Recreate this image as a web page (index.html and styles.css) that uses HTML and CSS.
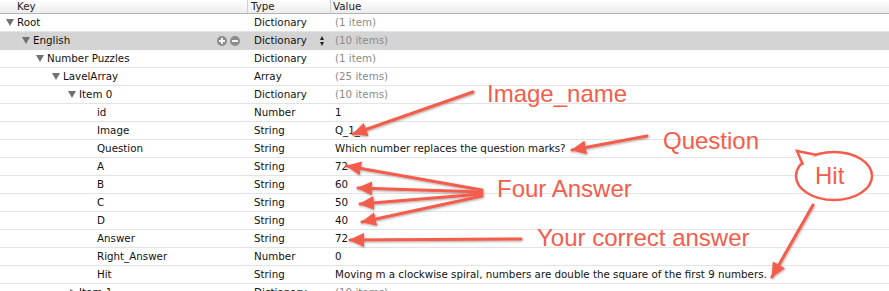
FILE: index.html
```html
<!DOCTYPE html>
<html lang="en">
<head>
  <meta charset="UTF-8">
  <title>Property List – Root</title>
  <link rel="stylesheet" href="styles.css">
</head>
<body>

  <div class="plist">
    <div class="head">
      <div class="h-key">Key</div>
      <div class="h-type">Type</div>
      <div class="h-value">Value</div>
    </div>

    <div class="row">
      <div class="key lvl0"><span class="twisty open"></span>Root</div>
      <div class="type">Dictionary</div>
      <div class="value muted">(1 item)</div>
    </div>
    <div class="row selected">
      <div class="key lvl1"><span class="twisty open"></span>English
        <span class="tools"><span class="btn plus"></span><span class="btn minus"></span></span>
      </div>
      <div class="type">Dictionary <span class="stepper"></span></div>
      <div class="value muted">(10 items)</div>
    </div>
    <div class="row">
      <div class="key lvl2"><span class="twisty open"></span>Number Puzzles</div>
      <div class="type">Dictionary</div>
      <div class="value muted">(1 item)</div>
    </div>
    <div class="row">
      <div class="key lvl3"><span class="twisty open"></span>LavelArray</div>
      <div class="type">Array</div>
      <div class="value muted">(25 items)</div>
    </div>
    <div class="row">
      <div class="key lvl4"><span class="twisty open"></span>Item 0</div>
      <div class="type">Dictionary</div>
      <div class="value muted">(10 items)</div>
    </div>
    <div class="row">
      <div class="key lvl5"><span class="twisty"></span>id</div>
      <div class="type">Number</div>
      <div class="value">1</div>
    </div>
    <div class="row">
      <div class="key lvl5"><span class="twisty"></span>Image</div>
      <div class="type">String</div>
      <div class="value">Q_1_rr</div>
    </div>
    <div class="row">
      <div class="key lvl5"><span class="twisty"></span>Question</div>
      <div class="type">String</div>
      <div class="value">Which number replaces the question marks?</div>
    </div>
    <div class="row">
      <div class="key lvl5"><span class="twisty"></span>A</div>
      <div class="type">String</div>
      <div class="value">72</div>
    </div>
    <div class="row">
      <div class="key lvl5"><span class="twisty"></span>B</div>
      <div class="type">String</div>
      <div class="value">60</div>
    </div>
    <div class="row">
      <div class="key lvl5"><span class="twisty"></span>C</div>
      <div class="type">String</div>
      <div class="value">50</div>
    </div>
    <div class="row">
      <div class="key lvl5"><span class="twisty"></span>D</div>
      <div class="type">String</div>
      <div class="value">40</div>
    </div>
    <div class="row">
      <div class="key lvl5"><span class="twisty"></span>Answer</div>
      <div class="type">String</div>
      <div class="value">72</div>
    </div>
    <div class="row">
      <div class="key lvl5"><span class="twisty"></span>Right_Answer</div>
      <div class="type">Number</div>
      <div class="value">0</div>
    </div>
    <div class="row">
      <div class="key lvl5"><span class="twisty"></span>Hit</div>
      <div class="type">String</div>
      <div class="value">Moving m a clockwise spiral, numbers are double the square of the first 9 numbers.</div>
    </div>
    <div class="row">
      <div class="key lvl4"><span class="twisty closed"></span>Item 1</div>
      <div class="type">Dictionary</div>
      <div class="value muted">(10 items)</div>
    </div>
  </div>

  <!-- hand-drawn notes on top of the list -->
  <svg class="notes" width="889" height="291" viewBox="0 0 889 291">
    <defs>
      <marker id="head" markerUnits="userSpaceOnUse" markerWidth="16" markerHeight="14" refX="14" refY="7" orient="auto">
        <path d="M0 0 L15 7 L0 14 Z" fill="#f45d4c"/>
      </marker>
      <filter id="shade" x="-10%" y="-10%" width="130%" height="130%">
        <feDropShadow dx="0.6" dy="1" stdDeviation="0.8" flood-color="#000" flood-opacity="0.35"/>
      </filter>
    </defs>

    <g class="arrows" filter="url(#shade)">
      <line x1="473" y1="92" x2="353" y2="134"/>
      <line x1="647" y1="136" x2="572" y2="150"/>
      <line x1="482" y1="190" x2="347" y2="166"/>
      <line x1="482" y1="192" x2="358" y2="188"/>
      <line x1="482" y1="194" x2="360" y2="204"/>
      <line x1="482" y1="196" x2="362" y2="222"/>
      <line x1="521" y1="239" x2="350" y2="240"/>
      <line x1="813" y1="205" x2="772" y2="277"/>
    </g>

    <g class="bubble">
      <ellipse cx="834" cy="176" rx="38" ry="24"/>
      <path class="tail-fill" d="M804 164 L797 151 L816 155 Z"/>
      <path class="tail" d="M803 165 L797 151 L817 155"/>
    </g>

    <g class="labels">
      <text x="487" y="102">Image_name</text>
      <text x="663" y="149">Question</text>
      <text x="497" y="197">Four Answer</text>
      <text x="537" y="246">Your correct answer</text>
      <text x="815" y="184">Hit</text>
    </g>
  </svg>

</body>
</html>
```

FILE: styles.css
```css
body {
  margin: 0;
  width: 889px;
  height: 291px;
  overflow: hidden;
  background: #fff;
  font-family: "DejaVu Sans", Verdana, sans-serif;
  font-size: 10.3px;
  color: #111;
  position: relative;
}
.plist {
  width: 889px;
}
.head {
  display: grid;
  grid-template-columns: 248px 83px 1fr;
  height: 13px;
  line-height: 13px;
  background: linear-gradient(#ffffff, #ececec);
  border-bottom: 1px solid #b4b4b4;
  color: #222;
}
.head > div {
  border-right: 1px solid #cfcfcf;
}
.h-key {
  padding-left: 17px;
}
.h-type {
  padding-left: 3px;
}
.h-value {
  padding-left: 2px;
  border-right: none !important;
}
.row {
  display: grid;
  grid-template-columns: 248px 83px 1fr;
  height: 17px;
  line-height: 17px;
  border-bottom: 1px solid #e3e3e3;
  white-space: nowrap;
}
.row.selected {
  background: #d4d4d4;
  border-bottom-color: #d4d4d4;
}
.key {
  display: flex;
  align-items: center;
}
.lvl0 { padding-left: 5px; }
.lvl1 { padding-left: 21px; }
.lvl2 { padding-left: 35px; }
.lvl3 { padding-left: 51px; }
.lvl4 { padding-left: 67px; }
.lvl5 { padding-left: 85px; }
.twisty {
  display: inline-block;
  width: 12px;
  height: 8px;
  flex: none;
}
.twisty.open::before {
  content: "";
  display: block;
  margin-left: 1px;
  width: 0;
  height: 0;
  border-left: 4.5px solid transparent;
  border-right: 4.5px solid transparent;
  border-top: 7px solid #717171;
}
.twisty.closed::before {
  content: "";
  display: block;
  margin-left: 3px;
  width: 0;
  height: 0;
  border-top: 4.5px solid transparent;
  border-bottom: 4.5px solid transparent;
  border-left: 7px solid #717171;
}
.tools {
  margin-left: auto;
  margin-right: 8px;
  display: flex;
  gap: 3px;
}
.btn {
  width: 10px;
  height: 10px;
  border-radius: 50%;
  background: #8b8b8b;
  position: relative;
}
.btn::before,
.plus::after {
  content: "";
  position: absolute;
  left: 2px;
  top: 4px;
  width: 6px;
  height: 2px;
  background: #f2f2f2;
}
.plus::after {
  left: 4px;
  top: 2px;
  width: 2px;
  height: 6px;
}
.type {
  padding-left: 6px;
  display: flex;
  align-items: center;
}
.stepper {
  margin-left: auto;
  margin-right: 6px;
  width: 5px;
  height: 10px;
  position: relative;
}
.stepper::before,
.stepper::after {
  content: "";
  position: absolute;
  left: 0;
  width: 0;
  height: 0;
  border-left: 2.5px solid transparent;
  border-right: 2.5px solid transparent;
}
.stepper::before {
  top: 0;
  border-bottom: 4px solid #222;
}
.stepper::after {
  bottom: 0;
  border-top: 4px solid #222;
}
.value {
  padding-left: 4px;
}
.muted {
  color: #8a8a8a;
}
.notes {
  position: absolute;
  left: 0;
  top: 0;
  pointer-events: none;
}
.arrows line {
  stroke: #f45d4c;
  stroke-width: 3;
  stroke-linecap: round;
  marker-end: url(#head);
}
.bubble ellipse {
  fill: #fff;
  stroke: #f45d4c;
  stroke-width: 2.5;
}
.tail-fill {
  fill: #fff;
}
.tail {
  fill: none;
  stroke: #f45d4c;
  stroke-width: 2.5;
  stroke-linejoin: miter;
}
.labels text {
  font-family: "Liberation Sans", Arial, sans-serif;
  font-size: 24px;
  fill: #f45d4c;
}
```
